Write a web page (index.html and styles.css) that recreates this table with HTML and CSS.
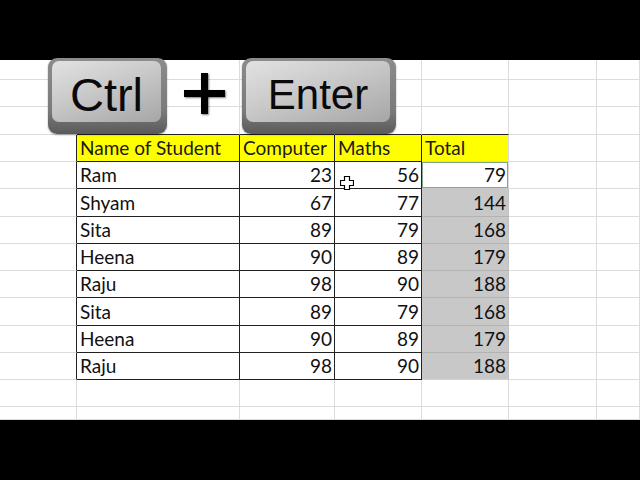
FILE: index.html
```html
<!DOCTYPE html>
<html>
<head>
<meta charset="utf-8">
<link rel="stylesheet" href="styles.css">
</head>
<body>
<div class="screen">
  <div class="bar"></div>
  <div class="sheet">
    <div class="row h20"><div class="c"></div><div class="c"></div><div class="c"></div><div class="c"></div><div class="c"></div><div class="c"></div><div class="c"></div></div>
    <div class="row h27"><div class="c"></div><div class="c"></div><div class="c"></div><div class="c"></div><div class="c"></div><div class="c"></div><div class="c"></div></div>
    <div class="row h28"><div class="c"></div><div class="c ab"></div><div class="c ab"></div><div class="c ab"></div><div class="c ab"></div><div class="c"></div><div class="c"></div></div>

    <div class="row h27"><div class="c lb"></div><div class="c t hd">Name of Student</div><div class="c t hd">Computer</div><div class="c t hd">Maths</div><div class="c hd hdt">Total</div><div class="c"></div><div class="c"></div></div>
    <div class="row h27"><div class="c lb"></div><div class="c t">Ram</div><div class="c t n">23</div><div class="c t n">56</div><div class="c n act">79</div><div class="c"></div><div class="c"></div></div>
    <div class="row h28"><div class="c lb"></div><div class="c t">Shyam</div><div class="c t n">67</div><div class="c t n">77</div><div class="c n sel">144</div><div class="c"></div><div class="c"></div></div>
    <div class="row h27"><div class="c lb"></div><div class="c t">Sita</div><div class="c t n">89</div><div class="c t n">79</div><div class="c n sel">168</div><div class="c"></div><div class="c"></div></div>
    <div class="row h27"><div class="c lb"></div><div class="c t">Heena</div><div class="c t n">90</div><div class="c t n">89</div><div class="c n sel">179</div><div class="c"></div><div class="c"></div></div>
    <div class="row h27"><div class="c lb"></div><div class="c t">Raju</div><div class="c t n">98</div><div class="c t n">90</div><div class="c n sel">188</div><div class="c"></div><div class="c"></div></div>
    <div class="row h28"><div class="c lb"></div><div class="c t">Sita</div><div class="c t n">89</div><div class="c t n">79</div><div class="c n sel">168</div><div class="c"></div><div class="c"></div></div>
    <div class="row h27"><div class="c lb"></div><div class="c t">Heena</div><div class="c t n">90</div><div class="c t n">89</div><div class="c n sel">179</div><div class="c"></div><div class="c"></div></div>
    <div class="row h27"><div class="c lb"></div><div class="c t">Raju</div><div class="c t n">98</div><div class="c t n">90</div><div class="c n sel last">188</div><div class="c"></div><div class="c"></div></div>

    <div class="row h27"><div class="c"></div><div class="c"></div><div class="c"></div><div class="c"></div><div class="c"></div><div class="c"></div><div class="c"></div></div>
    <div class="row h13"><div class="c"></div><div class="c"></div><div class="c"></div><div class="c"></div><div class="c"></div><div class="c"></div><div class="c"></div></div>
  </div>
  <div class="bar"></div>

  <div class="keys">
    <div class="key ctrl"><div class="face">Ctrl</div></div>
    <div class="plus"><span class="ph"></span><span class="pv"></span></div>
    <div class="key enter"><div class="face">Enter</div></div>
  </div>

  <svg class="cursor" width="14" height="14" viewBox="0 0 14 14">
    <path d="M4.5 0.5 H9.5 V4.5 H13.5 V9.5 H9.5 V13.5 H4.5 V9.5 H0.5 V4.5 H4.5 Z" fill="#fff" stroke="#000" stroke-width="1.2"/>
  </svg>
</div>
</body>
</html>
```

FILE: styles.css
```css
html, body {
  margin: 0;
  padding: 0;
  background: #000;
}
.screen {
  position: relative;
  width: 640px;
  height: 480px;
  display: flex;
  flex-direction: column;
  overflow: hidden;
  font-family: Lato, "Open Sans", sans-serif;
}
.bar {
  height: 60px;
  background: #000;
}
.sheet {
  height: 360px;
  background: #fff;
  display: flex;
  flex-direction: column;
}
.row {
  display: grid;
  grid-template-columns: 77px 163px 95px 87px 87px 88px 1fr;
}
.h13 { height: 13px; }
.h20 { height: 20px; }
.h27 { height: 27px; }
.h28 { height: 28px; }
.c {
  box-sizing: border-box;
  border-right: 1px solid #dcdcdc;
  border-bottom: 1px solid #dcdcdc;
  font-size: 19px;
  color: #111;
  padding: 0 2px 3px 3px;
  display: flex;
  align-items: flex-end;
  white-space: nowrap;
  overflow: hidden;
  line-height: 20px;
}
.ab { border-bottom-color: #222; }
.lb { border-right-color: #222; }
.t {
  border-right-color: #222;
  border-bottom-color: #222;
}
.hd {
  background: #ffff00;
  color: #1a1a1a;
}
.hdt {
  border-bottom-color: #d0d0d0;
}
.n {
  justify-content: flex-end;
}
.sel {
  background: #c8c8c8;
  border-bottom-color: #b3b3b3;
  border-right-color: #c0c0c0;
}
.sel.last { border-bottom-color: #d4d4d4; }
.act {
  background: #fff;
  box-shadow: inset 0 0 0 1px #86a58d;
  border-bottom-color: #c8c8c8;
  border-right-color: #dcdcdc;
}

.keys {
  position: absolute;
  left: 48px;
  top: 58px;
  display: flex;
  align-items: center;
  gap: 17px;
}
.key {
  box-sizing: border-box;
  height: 76px;
  border-radius: 9px;
  padding: 3px 6px 12px 4px;
  background: linear-gradient(180deg, #8c8c8c 0%, #7a7a7a 70%, #5a5a5a 100%);
  box-shadow: 0 1px 2px rgba(0,0,0,0.35);
}
.ctrl { width: 119px; }
.enter { width: 154px; }
.face {
  height: 100%;
  border-radius: 7px;
  background: linear-gradient(160deg, #e2e2e2 0%, #c9c9c9 45%, #a6a6a6 100%);
  display: flex;
  align-items: center;
  justify-content: center;
  font-family: "Liberation Sans", Arial, sans-serif;
  color: #0a0a0a;
  line-height: 1;
  padding-top: 6px;
  box-sizing: border-box;
}
.ctrl .face { font-size: 47px; }
.enter .face { font-size: 42px; }
.plus {
  position: relative;
  width: 41px;
  height: 41px;
  margin-top: -6px;
}
.ph, .pv {
  position: absolute;
  background: #000;
  box-shadow: 1px 1px 2px rgba(0,0,0,0.5);
}
.ph { left: 0; top: 17px; width: 41px; height: 7px; }
.pv { top: 0; left: 17px; width: 7px; height: 41px; }

.cursor {
  position: absolute;
  left: 340px;
  top: 176px;
}
```
